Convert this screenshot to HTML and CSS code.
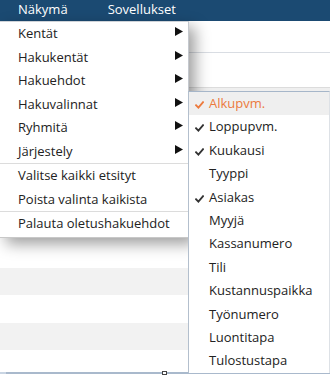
FILE: index.html
```
<!DOCTYPE html>
<html lang="fi">
<head>
<meta charset="utf-8">
<link rel="stylesheet" href="styles.css">
</head>
<body>
<div class="page">
  <header class="topbar">
    <span class="top-item">Näkymä</span>
    <span class="top-item">Sovellukset</span>
  </header>
  <div class="toolbar one"></div>
  <div class="toolbar two"></div>
  <div class="band"></div>
  <div class="rows">
    <div class="spacer"></div>
    <div class="row gray h27"></div>
    <div class="row h28"></div>
    <div class="row gray h27"></div>
    <div class="row h23"></div>
  </div>
  <div class="bottombar"><span class="bb-light"></span><span class="bb-handle"></span></div>

  <div class="menu">
    <div class="mi"><span>Kentät</span><svg class="arrow" width="8" height="9" viewBox="0 0 8 9"><polygon points="0,0 8,4.5 0,9"/></svg></div>
    <div class="mi"><span>Hakukentät</span><svg class="arrow" width="8" height="9" viewBox="0 0 8 9"><polygon points="0,0 8,4.5 0,9"/></svg></div>
    <div class="mi"><span>Hakuehdot</span><svg class="arrow" width="8" height="9" viewBox="0 0 8 9"><polygon points="0,0 8,4.5 0,9"/></svg></div>
    <div class="mi"><span>Hakuvalinnat</span><svg class="arrow" width="8" height="9" viewBox="0 0 8 9"><polygon points="0,0 8,4.5 0,9"/></svg></div>
    <div class="mi"><span>Ryhmitä</span><svg class="arrow" width="8" height="9" viewBox="0 0 8 9"><polygon points="0,0 8,4.5 0,9"/></svg></div>
    <div class="mi"><span>Järjestely</span><svg class="arrow" width="8" height="9" viewBox="0 0 8 9"><polygon points="0,0 8,4.5 0,9"/></svg></div>
    <div class="sep"></div>
    <div class="mi"><span>Valitse kaikki etsityt</span></div>
    <div class="mi"><span>Poista valinta kaikista</span></div>
    <div class="sep"></div>
    <div class="mi"><span>Palauta oletushakuehdot</span></div>
  </div>

  <div class="submenu">
    <div class="si active"><svg class="check" width="9" height="8" viewBox="0 0 9 8"><path d="M1 4.2 L3.4 6.6 L8 1.2"/></svg><span>Alkupvm.</span></div>
    <div class="si"><svg class="check" width="9" height="8" viewBox="0 0 9 8"><path d="M1 4.2 L3.4 6.6 L8 1.2"/></svg><span>Loppupvm.</span></div>
    <div class="si"><svg class="check" width="9" height="8" viewBox="0 0 9 8"><path d="M1 4.2 L3.4 6.6 L8 1.2"/></svg><span>Kuukausi</span></div>
    <div class="si"><span class="nocheck"></span><span>Tyyppi</span></div>
    <div class="si"><svg class="check" width="9" height="8" viewBox="0 0 9 8"><path d="M1 4.2 L3.4 6.6 L8 1.2"/></svg><span>Asiakas</span></div>
    <div class="si"><span class="nocheck"></span><span>Myyjä</span></div>
    <div class="si"><span class="nocheck"></span><span>Kassanumero</span></div>
    <div class="si"><span class="nocheck"></span><span>Tili</span></div>
    <div class="si"><span class="nocheck"></span><span>Kustannuspaikka</span></div>
    <div class="si"><span class="nocheck"></span><span>Työnumero</span></div>
    <div class="si"><span class="nocheck"></span><span>Luontitapa</span></div>
    <div class="si"><span class="nocheck"></span><span>Tulostustapa</span></div>
  </div>
</div>
</body>
</html>
```

FILE: styles.css
```
* { box-sizing: border-box; }
html, body { margin: 0; padding: 0; }
body {
  font-family: "Open Sans", "Noto Sans", sans-serif;
  font-size: 13px;
  color: #222;
  background: #fff;
  width: 330px;
  height: 375px;
  overflow: hidden;
}
.page {
  position: relative;
  width: 330px;
  height: 375px;
  display: flex;
  flex-direction: column;
}
.topbar {
  height: 21px;
  background: #1b4a72;
  display: flex;
  align-items: flex-start;
  padding-left: 18px;
  gap: 40px;
  flex: none;
}
.top-item {
  color: #fff;
  line-height: 19px;
  font-size: 13px;
}
.toolbar.one {
  height: 32px;
  border-bottom: 1px solid #d9dde3;
  flex: none;
}
.toolbar.two {
  height: 35px;
  border-bottom: 1px solid #dcdcdc;
  flex: none;
}
.band {
  height: 4px;
  background: #efefef;
  border-bottom: 1px solid #a6b6c9;
  flex: none;
}
.rows {
  display: flex;
  flex-direction: column;
  flex: none;
}
.spacer { height: 176px; }
.row { background: #fff; }
.row.gray { background: #f2f2f2; }
.h27 { height: 27px; }
.h28 { height: 28px; }
.h23 { height: 22px; }
.bottombar {
  height: 2px;
  background: #a9b9cc;
  display: flex;
  position: relative;
  flex: none;
}
.bb-light {
  width: 6px;
  background: #c9d5e3;
}
.bb-handle {
  position: absolute;
  left: 162px;
  top: -1px;
  width: 5px;
  height: 4px;
  border: 1px solid #444;
  background: #fff;
}

.menu {
  position: absolute;
  left: 0;
  top: 21px;
  width: 189px;
  background: #fff;
  border-top: 1px solid #cfd3d8;
  border-right: 1px solid #c4c8ce;
  border-bottom: 1px solid #c8c8c8;
  padding-bottom: 1px;
  box-shadow: 6px 6px 14px rgba(0, 0, 0, 0.38);
  z-index: 2;
}
.mi {
  height: 23.5px;
  line-height: 23.5px;
  padding-left: 18px;
  padding-right: 5px;
  display: flex;
  justify-content: space-between;
  align-items: flex-start;
  white-space: nowrap;
}
.arrow {
  margin-top: 5px;
  fill: #111;
  flex: none;
}
.sep {
  height: 1px;
  background: #dcdcdc;
}

.submenu {
  position: absolute;
  left: 188px;
  top: 91px;
  width: 142px;
  background: #fff;
  border-top: 1px solid #a6b6c9;
  border-left: 1px solid #b3bfcd;
  border-right: 1px solid #dde1e6;
  z-index: 3;
}
.si {
  height: 23.4px;
  line-height: 23.4px;
  display: flex;
  align-items: flex-start;
  padding-left: 6px;
  white-space: nowrap;
}
.si.active {
  background: #efefef;
  color: #ec7a3d;
}
.check {
  margin-top: 9px;
  margin-right: 5px;
  flex: none;
  fill: none;
  stroke: #333;
  stroke-width: 1.8;
  stroke-linecap: square;
}
.si.active .check { stroke: #ec7a3d; }
.nocheck {
  width: 9px;
  margin-right: 5px;
  flex: none;
}
```
